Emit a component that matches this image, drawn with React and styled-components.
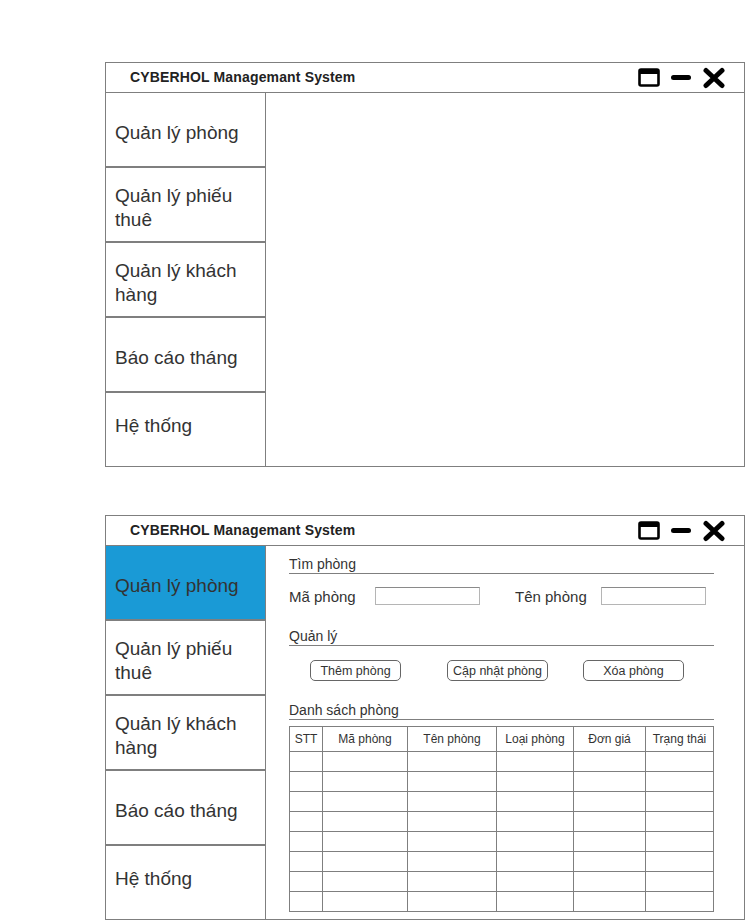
import styled, { createGlobalStyle } from "styled-components";

const GlobalStyle = createGlobalStyle`
  body {
    margin: 0;
    background: #fff;
    font-family: "Liberation Sans", Arial, sans-serif;
    color: #333;
  }
`;

const menu = [
  "Quản lý phòng",
  "Quản lý phiếu thuê",
  "Quản lý khách hàng",
  "Báo cáo tháng",
  "Hệ thống",
];

const columns = [
  { label: "STT", width: 33 },
  { label: "Mã phòng", width: 85 },
  { label: "Tên phòng", width: 89 },
  { label: "Loại phòng", width: 77 },
  { label: "Đơn giá", width: 72 },
  { label: "Trạng thái", width: 68 },
];

function WindowIcons() {
  return (
    <Icons>
      <svg width="22" height="19" viewBox="0 0 22 19">
        <rect x="1.5" y="1.5" width="19" height="16" rx="1.5" fill="none" stroke="#000" strokeWidth="2.6" />
        <rect x="1.5" y="1.5" width="19" height="4.5" fill="#000" />
      </svg>
      <svg width="22" height="19" viewBox="0 0 22 19">
        <rect x="1" y="7" width="20" height="5" rx="2.5" fill="#000" />
      </svg>
      <svg width="24" height="22" viewBox="0 0 24 22">
        <path d="M4 3.5 L20 18.5 M20 3.5 L4 18.5" stroke="#000" strokeWidth="5" strokeLinecap="round" />
      </svg>
    </Icons>
  );
}

function Sidebar({ active }) {
  return (
    <Side>
      {menu.map((m, i) => (
        <MenuItem key={m} $active={i === active} $last={i === menu.length - 1}>
          {m}
        </MenuItem>
      ))}
    </Side>
  );
}

function AppWindow({ active, children }) {
  return (
    <Win>
      <TitleBar>
        <Title>CYBERHOL Managemant System</Title>
        <WindowIcons />
      </TitleBar>
      <Body>
        <Sidebar active={active} />
        <Content>{children}</Content>
      </Body>
    </Win>
  );
}

export default function App() {
  const rows = Array.from({ length: 8 });
  return (
    <>
      <GlobalStyle />
      <Page>
        <AppWindow active={-1} />
        <AppWindow active={0}>
          <SectionTitle $top={10}>Tìm phòng</SectionTitle>
          <SearchRow>
            <FieldLabel $w={86}>Mã phòng</FieldLabel>
            <TextBox />
            <FieldLabel $w={86} $ml={35}>Tên phòng</FieldLabel>
            <TextBox />
          </SearchRow>
          <SectionTitle $top={23}>Quản lý</SectionTitle>
          <Actions>
            <ActButton $w={91} $ml={21}>Thêm phòng</ActButton>
            <ActButton $w={101} $ml={46}>Cập nhật phòng</ActButton>
            <ActButton $w={101} $ml={35}>Xóa phòng</ActButton>
          </Actions>
          <SectionTitle $top={21}>Danh sách phòng</SectionTitle>
          <Table>
            <colgroup>
              {columns.map((c) => (
                <col key={c.label} style={{ width: c.width }} />
              ))}
            </colgroup>
            <thead>
              <tr>
                {columns.map((c) => (
                  <Th key={c.label}>{c.label}</Th>
                ))}
              </tr>
            </thead>
            <tbody>
              {rows.map((_, r) => (
                <tr key={r}>
                  {columns.map((c) => (
                    <Td key={c.label} />
                  ))}
                </tr>
              ))}
            </tbody>
          </Table>
        </AppWindow>
      </Page>
    </>
  );
}

const Page = styled.div`
  padding: 62px 0 0 105px;
  display: flex;
  flex-direction: column;
  gap: 48px;
`;

const Win = styled.div`
  width: 638px;
  border: 1px solid #7f7f7f;
  display: flex;
  flex-direction: column;
  background: #fff;
`;

const TitleBar = styled.div`
  height: 29px;
  border-bottom: 1px solid #7f7f7f;
  display: flex;
  align-items: center;
  justify-content: space-between;
  padding: 0 18px 0 24px;
`;

const Title = styled.div`
  font-size: 14px;
  font-weight: bold;
  color: #222;
  letter-spacing: 0.15px;
  margin-top: -1px;
`;

const Icons = styled.div`
  display: flex;
  align-items: center;
  gap: 10px;
  margin-left: -1px;
`;

const Body = styled.div`
  display: flex;
  height: 373px;
  overflow: hidden;
`;

const Side = styled.div`
  width: 159px;
  border-right: 1px solid #7f7f7f;
  display: flex;
  flex-direction: column;
`;

const MenuItem = styled.div`
  box-sizing: border-box;
  flex: 0 0 ${(p) => (p.$last ? 73 : 75)}px;
  border-bottom: ${(p) => (p.$last ? "none" : "2px solid #7f7f7f")};
  background: ${(p) => (p.$active ? "#1a9ad6" : "#fff")};
  display: flex;
  align-items: center;
  padding: ${(p) => (p.$last ? "0 20px 7px 9px" : "7px 20px 0 9px")};
  font-size: 19px;
  line-height: 24px;
  color: #333;
`;

const Content = styled.div`
  flex: 1;
  padding: 0 30px 0 23px;
  display: flex;
  flex-direction: column;
`;

const SectionTitle = styled.div`
  margin-top: ${(p) => p.$top}px;
  font-size: 14px;
  line-height: 16px;
  padding-bottom: 1px;
  border-bottom: 1px solid #7f7f7f;
  color: #333;
`;

const SearchRow = styled.div`
  display: flex;
  align-items: center;
  margin-top: 13px;
  height: 18px;
`;

const FieldLabel = styled.div`
  width: ${(p) => p.$w}px;
  margin-left: ${(p) => p.$ml || 0}px;
  font-size: 15px;
  color: #333;
`;

const TextBox = styled.div`
  width: 103px;
  height: 16px;
  border: 1px solid #b5b5b5;
  border-top-color: #8a8a8a;
  background: #fff;
`;

const Actions = styled.div`
  display: flex;
  margin-top: 14px;
`;

const ActButton = styled.button`
  width: ${(p) => p.$w}px;
  margin-left: ${(p) => p.$ml}px;
  height: 21px;
  padding: 0;
  border: 1px solid #666;
  border-radius: 5px;
  background: #fff;
  font-family: "Liberation Sans", Arial, sans-serif;
  font-size: 12.5px;
  color: #333;
`;

const Table = styled.table`
  margin-top: 6px;
  width: 425px;
  border-collapse: collapse;
  table-layout: fixed;
  border: 1px solid #7f7f7f;
`;

const Th = styled.th`
  height: 24px;
  padding: 0;
  border: 1px solid #7f7f7f;
  font-weight: normal;
  font-size: 12px;
  color: #333;
  text-align: center;
`;

const Td = styled.td`
  height: 19px;
  padding: 0;
  border: 1px solid #7f7f7f;
`;
